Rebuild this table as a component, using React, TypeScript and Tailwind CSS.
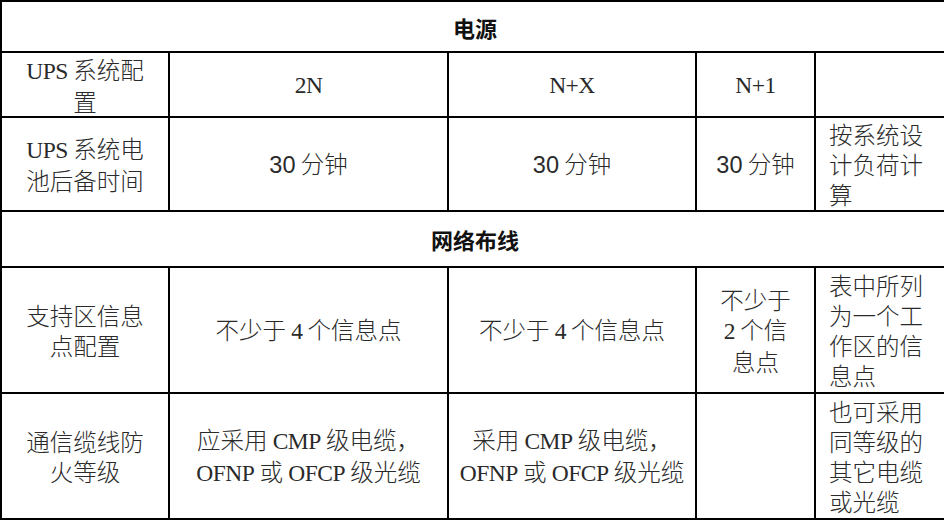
import React from "react";

const cell =
  "border-r-2 border-b-2 border-black flex items-center justify-center text-center";
const leftCell =
  "border-r-2 border-b-2 border-black flex items-center justify-start text-left pl-[13px]";

function L({ children }: { children: React.ReactNode }) {
  return (
    <span className="font-['Liberation_Serif','Times_New_Roman',serif] font-normal tracking-[-0.5px]">
      {children}
    </span>
  );
}

function N30() {
  return <span className="font-['Liberation_Sans','Arial',sans-serif]">30</span>;
}

export default function App() {
  return (
    <div className="w-[944px] h-[523px] overflow-hidden bg-white">
      <div className="w-max grid grid-cols-[168px_279px_248px_119px_134px] grid-rows-[51px_65px_94px_56px_126px_126px] border-l-2 border-t-2 border-black text-[#2a2a2a] text-[23.5px] leading-[30px] font-light font-['Noto_Sans_CJK_SC',sans-serif]">
        <div className={`${cell} col-span-5 font-bold text-[22px] text-[#111]`}>电源</div>

        <div className={cell}>
          <span>
            <L>UPS</L> 系统配
            <br />置
          </span>
        </div>
        <div className={cell}>
          <L>2N</L>
        </div>
        <div className={cell}>
          <L>N+X</L>
        </div>
        <div className={cell}>
          <L>N+1</L>
        </div>
        <div className={leftCell}></div>

        <div className={cell}>
          <span>
            <L>UPS</L> 系统电
            <br />
            池后备时间
          </span>
        </div>
        <div className={cell}>
          <span>
            <N30 /> 分钟
          </span>
        </div>
        <div className={cell}>
          <span>
            <N30 /> 分钟
          </span>
        </div>
        <div className={cell}>
          <span>
            <N30 /> 分钟
          </span>
        </div>
        <div className={leftCell}>
          <span>
            按系统设
            <br />
            计负荷计
            <br />算
          </span>
        </div>

        <div className={`${cell} col-span-5 font-bold text-[22px] text-[#111]`}>网络布线</div>

        <div className={cell}>
          <span>
            支持区信息
            <br />
            点配置
          </span>
        </div>
        <div className={cell}>
          <span>
            不少于 <L>4</L> 个信息点
          </span>
        </div>
        <div className={cell}>
          <span>
            不少于 <L>4</L> 个信息点
          </span>
        </div>
        <div className={cell}>
          <span>
            不少于
            <br />
            <L>2</L> 个信
            <br />
            息点
          </span>
        </div>
        <div className={leftCell}>
          <span>
            表中所列
            <br />
            为一个工
            <br />
            作区的信
            <br />
            息点
          </span>
        </div>

        <div className={cell}>
          <span>
            通信缆线防
            <br />
            火等级
          </span>
        </div>
        <div className={cell}>
          <span>
            应采用 <L>CMP</L> 级电缆，
            <br />
            <L>OFNP</L> 或 <L>OFCP</L> 级光缆
          </span>
        </div>
        <div className={cell}>
          <span>
            采用 <L>CMP</L> 级电缆，
            <br />
            <L>OFNP</L> 或 <L>OFCP</L> 级光缆
          </span>
        </div>
        <div className={cell}></div>
        <div className={leftCell}>
          <span>
            也可采用
            <br />
            同等级的
            <br />
            其它电缆
            <br />
            或光缆
          </span>
        </div>
      </div>
    </div>
  );
}
